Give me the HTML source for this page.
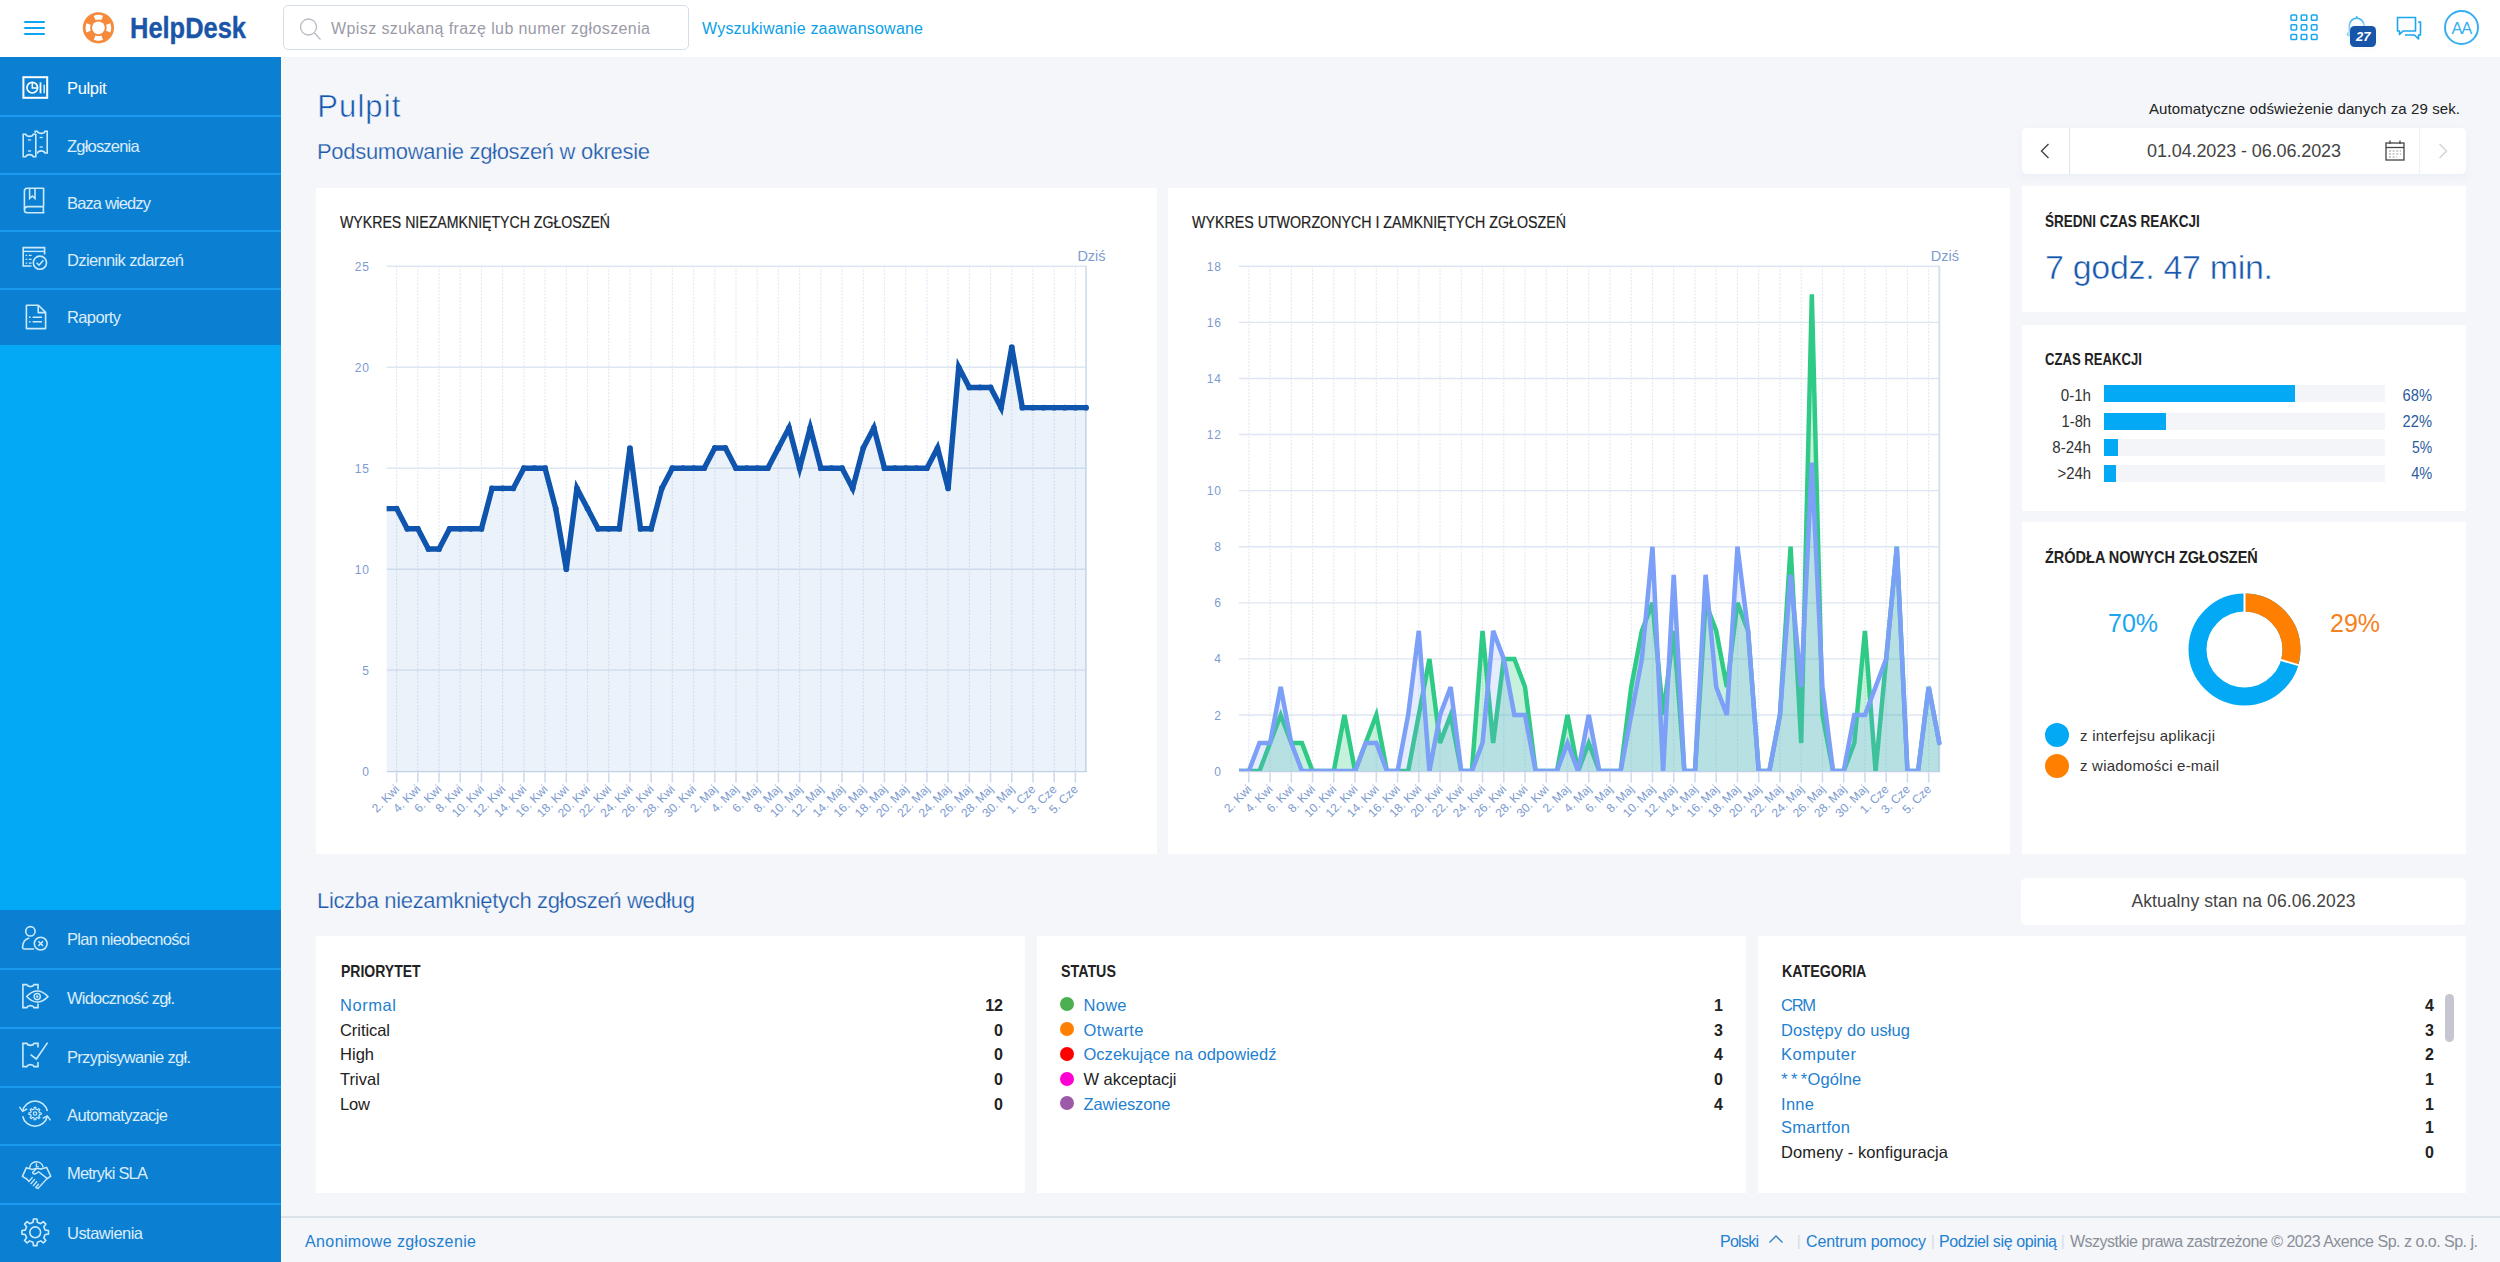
<!DOCTYPE html>
<html lang="pl"><head><meta charset="utf-8"><title>HelpDesk - Pulpit</title>
<style>
html,body{margin:0;padding:0;overflow:hidden;}
html{width:2500px;height:1262px;}
body{width:2500px;height:1262px;overflow:hidden;background:#f4f6fa;position:relative;font-family:"Liberation Sans",sans-serif;}
.t{position:absolute;white-space:nowrap;}
.b{position:absolute;}
svg{position:absolute;overflow:visible;}
</style></head><body>
<div class="b" style="left:0px;top:0px;width:2500px;height:57px;background:#fff;"></div>
<div class="b" style="left:24.4px;top:21.4px;width:21px;height:2px;background:#0aa4f2;border-radius:1px;"></div>
<div class="b" style="left:24.4px;top:27.2px;width:21px;height:2px;background:#0aa4f2;border-radius:1px;"></div>
<div class="b" style="left:24.4px;top:33.0px;width:21px;height:2px;background:#0aa4f2;border-radius:1px;"></div>
<svg style="left:0;top:0" width="300" height="57" viewBox="0 0 300 57"><circle cx="98.4" cy="27.8" r="15.6" fill="#f6893a"/><circle cx="98.4" cy="27.8" r="6.4" fill="#fff"/><path d="M93.78 15.76 A12.9 12.9 0 0 1 103.02 15.76 L101.37 20.05 A8.3 8.3 0 0 0 95.43 20.05 Z" fill="#fff"/><path d="M110.44 23.18 A12.9 12.9 0 0 1 110.44 32.42 L106.15 30.77 A8.3 8.3 0 0 0 106.15 24.83 Z" fill="#fff"/><path d="M103.02 39.84 A12.9 12.9 0 0 1 93.78 39.84 L95.43 35.55 A8.3 8.3 0 0 0 101.37 35.55 Z" fill="#fff"/><path d="M86.36 32.42 A12.9 12.9 0 0 1 86.36 23.18 L90.65 24.83 A8.3 8.3 0 0 0 90.65 30.77 Z" fill="#fff"/></svg>
<div class="t" style="top:8.0px;font-size:30px;line-height:39px;color:#1b55a8;font-weight:bold;left:130.0px;transform:scaleX(0.8484);transform-origin:0 50%;-webkit-text-stroke:0.4px #1b55a8;">HelpDesk</div>
<div class="b" style="left:283px;top:5px;width:404px;height:43px;background:#fff;border:1px solid #d5ddea;border-radius:5px;"></div>
<svg style="left:298px;top:17px" width="24" height="24" viewBox="0 0 24 24" fill="none" stroke="#b9b9c4" stroke-width="1.3">
<circle cx="10.5" cy="10" r="8"/><line x1="16.5" y1="16" x2="22.5" y2="22.5"/></svg>
<div class="t" style="top:17.5px;font-size:16px;line-height:21px;color:#9a9aa8;letter-spacing:0.404px;left:331.0px;">Wpisz szukaną frazę lub numer zgłoszenia</div>
<div class="t" style="top:17.5px;font-size:16px;line-height:21px;color:#0a9fe8;letter-spacing:0.210px;left:702.0px;">Wyszukiwanie zaawansowane</div>
<svg style="left:2290px;top:14px" width="28" height="28" viewBox="0 0 28 28" fill="none" stroke="#1ba6f0" stroke-width="1.5"><rect x="1.0" y="1.0" width="5.6" height="5.2" rx="0.8"/><rect x="11.2" y="1.0" width="5.6" height="5.2" rx="0.8"/><rect x="21.4" y="1.0" width="5.6" height="5.2" rx="0.8"/><rect x="1.0" y="10.7" width="5.6" height="5.2" rx="0.8"/><rect x="11.2" y="10.7" width="5.6" height="5.2" rx="0.8"/><rect x="21.4" y="10.7" width="5.6" height="5.2" rx="0.8"/><rect x="1.0" y="20.4" width="5.6" height="5.2" rx="0.8"/><rect x="11.2" y="20.4" width="5.6" height="5.2" rx="0.8"/><rect x="21.4" y="20.4" width="5.6" height="5.2" rx="0.8"/></svg>
<svg style="left:0;top:0" width="2500" height="57" viewBox="0 0 2500 57" fill="none" stroke="#35aef2" stroke-width="1.6">
<path d="M2349.6 32.6 C2349.2 30.4 2349.4 28.2 2349.4 25.6 A7.3 7.3 0 0 1 2364 25.6 V27"/>
<line x1="2356.7" y1="16.2" x2="2356.7" y2="18.4"/>
<circle cx="2348.6" cy="34.2" r="1.3" stroke-width="1.3"/>
</svg>
<div class="b" style="left:2350px;top:26px;width:26px;height:20.6px;background:#1755a8;border-radius:4.5px;box-shadow:0 0 6px 3px rgba(246,248,252,0.7);"></div>
<div class="t" style="top:28.3px;font-size:13px;line-height:17px;color:#fff;font-weight:bold;left:2226.6px;width:273.4px;text-align:center;font-style:italic;">27</div>
<svg style="left:2396.4px;top:16.2px" width="28" height="26" viewBox="0 0 28 26" fill="none" stroke="#1ba6f0" stroke-width="1.6" stroke-linejoin="round">
<path d="M1.5 1.5 H19.5 V15 H7 L3.5 18.5 V15 H1.5 Z"/>
<path d="M22 6 H24.5 V19 H22.5 V23 L18.5 19 H9"/>
</svg>
<div class="b" style="left:2444px;top:10px;width:31px;height:31px;background:#fff;border:2px solid #35aef2;border-radius:50%;"></div>
<div class="t" style="top:17.7px;font-size:16.5px;line-height:21px;color:#35aef2;letter-spacing:-1.200px;left:2422.6px;width:77.4px;text-align:center;">AA</div>
<div class="b" style="left:0px;top:57px;width:281px;height:1205px;background:#03a9f4;"></div>
<div class="b" style="left:281px;top:57px;width:1px;height:1205px;background:#fcfdff;"></div>
<div class="b" style="left:0px;top:57px;width:281px;height:59px;background:#0b80d3;"></div>
<div class="t" style="top:77.8px;font-size:16.5px;line-height:21px;color:#fff;letter-spacing:-0.335px;left:67.0px;">Pulpit</div>
<div class="b" style="left:0px;top:116px;width:281px;height:58px;background:#0b80d3;"></div>
<div class="b" style="left:0px;top:115px;width:281px;height:1.5px;background:#1a9bf0;"></div>
<div class="t" style="top:135.8px;font-size:16.5px;line-height:21px;color:#dcedfb;letter-spacing:-0.799px;left:67.0px;">Zgłoszenia</div>
<div class="b" style="left:0px;top:174px;width:281px;height:57px;background:#0b80d3;"></div>
<div class="b" style="left:0px;top:173px;width:281px;height:1.5px;background:#1a9bf0;"></div>
<div class="t" style="top:192.6px;font-size:16.5px;line-height:21px;color:#dcedfb;letter-spacing:-0.862px;left:67.0px;">Baza wiedzy</div>
<div class="b" style="left:0px;top:231px;width:281px;height:58px;background:#0b80d3;"></div>
<div class="b" style="left:0px;top:230px;width:281px;height:1.5px;background:#1a9bf0;"></div>
<div class="t" style="top:249.8px;font-size:16.5px;line-height:21px;color:#dcedfb;letter-spacing:-0.637px;left:67.0px;">Dziennik zdarzeń</div>
<div class="b" style="left:0px;top:289px;width:281px;height:56px;background:#0b80d3;"></div>
<div class="b" style="left:0px;top:288px;width:281px;height:1.5px;background:#1a9bf0;"></div>
<div class="t" style="top:307.0px;font-size:16.5px;line-height:21px;color:#dcedfb;letter-spacing:-0.628px;left:67.0px;">Raporty</div>
<div class="b" style="left:0px;top:910px;width:281px;height:59px;background:#0b80d3;"></div>
<div class="t" style="top:928.9px;font-size:16.5px;line-height:21px;color:#dcedfb;letter-spacing:-0.682px;left:67.0px;">Plan nieobecności</div>
<div class="b" style="left:0px;top:969px;width:281px;height:59px;background:#0b80d3;"></div>
<div class="b" style="left:0px;top:968px;width:281px;height:1.5px;background:#1a9bf0;"></div>
<div class="t" style="top:987.9px;font-size:16.5px;line-height:21px;color:#dcedfb;letter-spacing:-0.800px;left:67.0px;">Widoczność zgł.</div>
<div class="b" style="left:0px;top:1028px;width:281px;height:59px;background:#0b80d3;"></div>
<div class="b" style="left:0px;top:1027px;width:281px;height:1.5px;background:#1a9bf0;"></div>
<div class="t" style="top:1046.7px;font-size:16.5px;line-height:21px;color:#dcedfb;letter-spacing:-0.689px;left:67.0px;">Przypisywanie zgł.</div>
<div class="b" style="left:0px;top:1087px;width:281px;height:58px;background:#0b80d3;"></div>
<div class="b" style="left:0px;top:1086px;width:281px;height:1.5px;background:#1a9bf0;"></div>
<div class="t" style="top:1105.0px;font-size:16.5px;line-height:21px;color:#dcedfb;letter-spacing:-0.601px;left:67.0px;">Automatyzacje</div>
<div class="b" style="left:0px;top:1145px;width:281px;height:59px;background:#0b80d3;"></div>
<div class="b" style="left:0px;top:1144px;width:281px;height:1.5px;background:#1a9bf0;"></div>
<div class="t" style="top:1163.4px;font-size:16.5px;line-height:21px;color:#dcedfb;letter-spacing:-0.794px;left:67.0px;">Metryki SLA</div>
<div class="b" style="left:0px;top:1204px;width:281px;height:58px;background:#0b80d3;"></div>
<div class="b" style="left:0px;top:1203px;width:281px;height:1.5px;background:#1a9bf0;"></div>
<div class="t" style="top:1222.5px;font-size:16.5px;line-height:21px;color:#dcedfb;letter-spacing:-0.522px;left:67.0px;">Ustawienia</div>
<svg style="left:0;top:0" width="300" height="1262" viewBox="0 0 300 1262" stroke-linecap="butt"><rect x="23.4" y="77.2" width="23.8" height="20.6" fill="none" stroke="#ffffff" stroke-width="2"/><circle cx="32.3" cy="87.7" r="5.3" fill="none" stroke="#ffffff" stroke-width="1.7"/><path d="M32.3 83 V87.9 H37" fill="none" stroke="#ffffff" stroke-width="1.5" /><path d="M40.5 82.3 V93.3" fill="none" stroke="#ffffff" stroke-width="1.8" /><path d="M44.2 84.8 V93.3" fill="none" stroke="#d9eefb" stroke-width="1.5" /><path d="M35.2 131.2 H37.4 C38.4 134.06 44.00000000000001 134.06 45.00000000000001 131.2 H47.2 V153.0 H45.00000000000001 C44.00000000000001 150.14 38.4 150.14 37.4 153.0 H35.2 Z" fill="none" stroke="#cdeafc" stroke-width="1.6" stroke-linejoin="miter"/><rect x="22.2" y="133" width="14.6" height="25" fill="#0b80d3" stroke="none"/><path d="M23.2 134.2 H25.7 C26.7 137.06 32.300000000000004 137.06 33.300000000000004 134.2 H35.8 V156.8 H33.300000000000004 C32.300000000000004 153.94 26.7 153.94 25.7 156.8 H23.2 Z" fill="none" stroke="#cdeafc" stroke-width="1.6" stroke-linejoin="miter"/><path d="M27.9 140 H31.1" fill="none" stroke="#cdeafc" stroke-width="1.3" /><path d="M27.9 151 H31.1" fill="none" stroke="#cdeafc" stroke-width="1.3" /><path d="M39.6 137.5 H42.800000000000004" fill="none" stroke="#cdeafc" stroke-width="1.3" /><path d="M39.6 147 H42.800000000000004" fill="none" stroke="#cdeafc" stroke-width="1.3" /><path d="M43.6 206.2 V188.2 H27.2 Q24.4 188.2 24.4 191 V210 Q24.4 212.8 27.2 212.8 H44.4 M24.6 209.4 Q24.8 206.6 27.6 206.6 H43.6 M43.4 206.6 V212.6" fill="none" stroke="#cdeafc" stroke-width="1.6" stroke-linejoin="round"/><path d="M29.6 188.4 V198.6 L32.3 196 L35 198.6 V188.4" fill="none" stroke="#cdeafc" stroke-width="1.5" /><path d="M31.5 266 H23.2 V247.6 H44.6 V254.5" fill="none" stroke="#cdeafc" stroke-width="1.6" /><path d="M23.2 251.4 H44.6" fill="none" stroke="#cdeafc" stroke-width="1.4" /><path d="M25.6 255.4 H27.2 M28.8 255.4 H31.6" fill="none" stroke="#cdeafc" stroke-width="1.3" /><path d="M25.6 259.4 H27.2 M28.8 259.4 H31.6" fill="none" stroke="#cdeafc" stroke-width="1.3" /><path d="M25.6 263.2 H27.2 M28.8 263.2 H31.6" fill="none" stroke="#cdeafc" stroke-width="1.3" /><circle cx="39.9" cy="262.7" r="6.6" fill="none" stroke="#cdeafc" stroke-width="1.6"/><path d="M36.6 262.8 L39 265.2 L43.4 260.2" fill="none" stroke="#cdeafc" stroke-width="1.6" /><path d="M26.4 305.2 H38.4 L45.6 312.4 V328.6 H26.4 Z M38.2 305.4 V312.6 H45.4" fill="none" stroke="#cdeafc" stroke-width="1.6" stroke-linejoin="round"/><path d="M29 317.3 H30.6 M32.6 317.3 H42" fill="none" stroke="#cdeafc" stroke-width="1.4" /><path d="M29 321.8 H30.6 M32.6 321.8 H42" fill="none" stroke="#cdeafc" stroke-width="1.4" /><circle cx="30.4" cy="931.3" r="4.7" fill="none" stroke="#cdeafc" stroke-width="1.6"/><path d="M33.5 949 H24.2 Q22.4 949 22.6 946.6 Q23.2 939.6 28.6 938.2" fill="none" stroke="#cdeafc" stroke-width="1.6" stroke-linecap="round"/><circle cx="40.7" cy="943.6" r="6.4" fill="none" stroke="#cdeafc" stroke-width="1.6"/><path d="M38.4 941.3 L43 945.9 M43 941.3 L38.4 945.9" fill="none" stroke="#cdeafc" stroke-width="1.5" /><path d="M38.0 989.5 V984.6 H34.050000000000004 C33.050000000000004 987.24 27.85 987.24 26.85 984.6 H22.9 V1007.6 H26.85 C27.85 1004.96 33.050000000000004 1004.96 34.050000000000004 1007.6 H38.0 V1003.5" fill="none" stroke="#cdeafc" stroke-width="1.6" /><path d="M26.6 996.6 Q37.2 985.6 48 996.6 Q37.2 1007.6 26.6 996.6 Z" fill="none" stroke="#cdeafc" stroke-width="1.5" stroke-linejoin="round"/><circle cx="37.2" cy="996.6" r="3.1" fill="none" stroke="#cdeafc" stroke-width="1.4"/><circle cx="37.2" cy="996.6" r="0.9" fill="#cdeafc" stroke="#cdeafc" stroke-width="0.8"/><path d="M38.0 1047.5 V1043.4 H34.050000000000004 C33.050000000000004 1046.0400000000002 27.85 1046.0400000000002 26.85 1043.4 H22.9 V1066.6 H26.85 C27.85 1063.9599999999998 33.050000000000004 1063.9599999999998 34.050000000000004 1066.6 H38.0 V1062" fill="none" stroke="#cdeafc" stroke-width="1.6" /><path d="M30.6 1054.6 L36.3 1059 L47.6 1042.6" fill="none" stroke="#cdeafc" stroke-width="1.6" /><path d="M22.68 1110.98 A12.6 12.6 0 0 1 47.32 1110.98" fill="none" stroke="#cdeafc" stroke-width="1.5" /><path d="M47.32 1116.22 A12.6 12.6 0 0 1 22.68 1116.22" fill="none" stroke="#cdeafc" stroke-width="1.5" /><path d="M19.48 1106.78 L22.68 1111.38 L27.28 1108.78" fill="none" stroke="#cdeafc" stroke-width="1.4" /><path d="M50.52 1120.42 L47.32 1115.82 L42.72 1118.42" fill="none" stroke="#cdeafc" stroke-width="1.4" /><path d="M41.14 1112.77 L41.14 1114.43 L39.40 1114.55 L38.78 1116.04 L39.93 1117.36 L38.76 1118.53 L37.44 1117.38 L35.95 1118.00 L35.83 1119.74 L34.17 1119.74 L34.05 1118.00 L32.56 1117.38 L31.24 1118.53 L30.07 1117.36 L31.22 1116.04 L30.60 1114.55 L28.86 1114.43 L28.86 1112.77 L30.60 1112.65 L31.22 1111.16 L30.07 1109.84 L31.24 1108.67 L32.56 1109.82 L34.05 1109.20 L34.17 1107.46 L35.83 1107.46 L35.95 1109.20 L37.44 1109.82 L38.76 1108.67 L39.93 1109.84 L38.78 1111.16 L39.40 1112.65 Z" fill="none" stroke="#cdeafc" stroke-width="1.2" stroke-linejoin="round"/><circle cx="35.0" cy="1113.6" r="1.7" fill="none" stroke="#cdeafc" stroke-width="1.1"/><path d="M29.6 1167.8 A6.9 6.9 0 0 1 43.2 1167.4" fill="none" stroke="#cdeafc" stroke-width="1.5" /><path d="M36.4 1163.2 V1166.8 H38.8" fill="none" stroke="#cdeafc" stroke-width="1.3" /><path d="M26.4 1167.6 L22.4 1176.4 L26 1178.6 M26.2 1167.8 L32 1169.4 M46.6 1167.4 L50.8 1176.2 L47.2 1178.6 M46.4 1167.6 L41 1169" fill="none" stroke="#cdeafc" stroke-width="1.5" stroke-linejoin="round" stroke-linecap="round"/><path d="M32 1169.4 L36.4 1168.4 L41 1169 M36.4 1168.6 L32.6 1172.6 Q33.8 1175 36.6 1173.2 L38.6 1171.8 L47 1178.4" fill="none" stroke="#cdeafc" stroke-width="1.4" stroke-linejoin="round" stroke-linecap="round"/><path d="M26.2 1178.6 L29 1181.4 M29 1181.4 L32.2 1177.6 M31 1183.6 L34.4 1179.6 M33.4 1185.6 L36.6 1181.8 M35.8 1187.4 L38.4 1184.2 M36 1187.6 L38 1188.4 L47 1178.6" fill="none" stroke="#cdeafc" stroke-width="1.4" stroke-linecap="round"/><path d="M48.48 1230.52 L48.48 1234.08 L45.17 1234.45 L43.77 1237.83 L45.85 1240.43 L43.33 1242.95 L40.73 1240.87 L37.35 1242.27 L36.98 1245.58 L33.42 1245.58 L33.05 1242.27 L29.67 1240.87 L27.07 1242.95 L24.55 1240.43 L26.63 1237.83 L25.23 1234.45 L21.92 1234.08 L21.92 1230.52 L25.23 1230.15 L26.63 1226.77 L24.55 1224.17 L27.07 1221.65 L29.67 1223.73 L33.05 1222.33 L33.42 1219.02 L36.98 1219.02 L37.35 1222.33 L40.73 1223.73 L43.33 1221.65 L45.85 1224.17 L43.77 1226.77 L45.17 1230.15 Z" fill="none" stroke="#cdeafc" stroke-width="1.6" stroke-linejoin="round"/><circle cx="35.2" cy="1232.3" r="5.4" fill="none" stroke="#cdeafc" stroke-width="1.6"/></svg>
<div class="t" style="top:87.0px;font-size:31px;line-height:40px;color:#1657ad;letter-spacing:1.091px;left:317.3px;-webkit-text-stroke:0.55px #f4f6fa;">Pulpit</div>
<div class="t" style="top:137.1px;font-size:22px;line-height:29px;color:#1c5aab;letter-spacing:-0.313px;left:317.0px;-webkit-text-stroke:0.25px #f4f6fa;">Podsumowanie zgłoszeń w okresie</div>
<div class="t" style="top:99.0px;font-size:15px;line-height:20px;color:#222;letter-spacing:0.102px;right:39.9px;">Automatyczne odświeżenie danych za 29 sek.</div>
<div class="b" style="left:2022px;top:128px;width:444px;height:46px;background:#fff;border-radius:5px;box-shadow:0 3px 8px rgba(190,205,230,0.16);"></div>
<div class="b" style="left:2069px;top:128px;width:1px;height:46px;background:#dfe5ef;"></div>
<div class="b" style="left:2419px;top:128px;width:1px;height:46px;background:#eef1f6;"></div>
<svg style="left:2039px;top:142px" width="12" height="18" viewBox="0 0 12 18" fill="none" stroke="#444" stroke-width="1.4"><path d="M9.5 2 L2.5 9 L9.5 16"/></svg>
<svg style="left:2437px;top:142px" width="12" height="18" viewBox="0 0 12 18" fill="none" stroke="#cfd3da" stroke-width="1.4"><path d="M2.5 2 L9.5 9 L2.5 16"/></svg>
<div class="t" style="top:139.5px;font-size:18px;line-height:23px;color:#444;letter-spacing:-0.098px;left:2147.0px;">01.04.2023 - 06.06.2023</div>
<svg style="left:2385px;top:140px" width="20" height="21" viewBox="0 0 20 21" fill="none" stroke="#444" stroke-width="1.3">
<rect x="1" y="3" width="18" height="17"/><line x1="1" y1="7.5" x2="19" y2="7.5"/><line x1="5" y1="0.5" x2="5" y2="4"/><line x1="15" y1="0.5" x2="15" y2="4"/>
<g stroke="#999" stroke-width="1" stroke-dasharray="2 1.6"><line x1="4" y1="11" x2="16" y2="11"/><line x1="4" y1="14" x2="16" y2="14"/><line x1="4" y1="17" x2="12" y2="17"/></g></svg>
<div class="b" style="left:316px;top:188px;width:841px;height:666px;background:#fff;"></div>
<div class="b" style="left:1168px;top:188px;width:842px;height:666px;background:#fff;"></div>
<div class="b" style="left:2022px;top:186px;width:444px;height:126px;background:#fff;"></div>
<div class="b" style="left:2022px;top:325px;width:444px;height:185.5px;background:#fff;"></div>
<div class="b" style="left:2022px;top:522px;width:444px;height:332px;background:#fff;"></div>
<div class="t" style="top:211.8px;font-size:17px;line-height:22px;color:#222;left:340.0px;transform:scaleX(0.8310);transform-origin:0 50%;-webkit-text-stroke:0.2px #222;">WYKRES NIEZAMKNIĘTYCH ZGŁOSZEŃ</div>
<div class="t" style="top:211.8px;font-size:17px;line-height:22px;color:#222;left:1192.0px;transform:scaleX(0.8372);transform-origin:0 50%;-webkit-text-stroke:0.2px #222;">WYKRES UTWORZONYCH I ZAMKNIĘTYCH ZGŁOSZEŃ</div>
<svg style="left:0;top:0" width="2500" height="1262" viewBox="0 0 2500 1262" font-family="Liberation Sans, sans-serif"><clipPath id="cp1"><rect x="386.8" y="258.3" width="706.0" height="513.3"/></clipPath><line x1="396.61" y1="266.3" x2="396.61" y2="771.1" stroke="#e3eaf5" stroke-width="1.2" stroke-dasharray="2 1.4"/><line x1="417.82" y1="266.3" x2="417.82" y2="771.1" stroke="#e3eaf5" stroke-width="1.2" stroke-dasharray="2 1.4"/><line x1="439.03" y1="266.3" x2="439.03" y2="771.1" stroke="#e3eaf5" stroke-width="1.2" stroke-dasharray="2 1.4"/><line x1="460.24" y1="266.3" x2="460.24" y2="771.1" stroke="#e3eaf5" stroke-width="1.2" stroke-dasharray="2 1.4"/><line x1="481.45" y1="266.3" x2="481.45" y2="771.1" stroke="#e3eaf5" stroke-width="1.2" stroke-dasharray="2 1.4"/><line x1="502.67" y1="266.3" x2="502.67" y2="771.1" stroke="#e3eaf5" stroke-width="1.2" stroke-dasharray="2 1.4"/><line x1="523.88" y1="266.3" x2="523.88" y2="771.1" stroke="#e3eaf5" stroke-width="1.2" stroke-dasharray="2 1.4"/><line x1="545.09" y1="266.3" x2="545.09" y2="771.1" stroke="#e3eaf5" stroke-width="1.2" stroke-dasharray="2 1.4"/><line x1="566.30" y1="266.3" x2="566.30" y2="771.1" stroke="#e3eaf5" stroke-width="1.2" stroke-dasharray="2 1.4"/><line x1="587.52" y1="266.3" x2="587.52" y2="771.1" stroke="#e3eaf5" stroke-width="1.2" stroke-dasharray="2 1.4"/><line x1="608.73" y1="266.3" x2="608.73" y2="771.1" stroke="#e3eaf5" stroke-width="1.2" stroke-dasharray="2 1.4"/><line x1="629.94" y1="266.3" x2="629.94" y2="771.1" stroke="#e3eaf5" stroke-width="1.2" stroke-dasharray="2 1.4"/><line x1="651.15" y1="266.3" x2="651.15" y2="771.1" stroke="#e3eaf5" stroke-width="1.2" stroke-dasharray="2 1.4"/><line x1="672.36" y1="266.3" x2="672.36" y2="771.1" stroke="#e3eaf5" stroke-width="1.2" stroke-dasharray="2 1.4"/><line x1="693.58" y1="266.3" x2="693.58" y2="771.1" stroke="#e3eaf5" stroke-width="1.2" stroke-dasharray="2 1.4"/><line x1="714.79" y1="266.3" x2="714.79" y2="771.1" stroke="#e3eaf5" stroke-width="1.2" stroke-dasharray="2 1.4"/><line x1="736.00" y1="266.3" x2="736.00" y2="771.1" stroke="#e3eaf5" stroke-width="1.2" stroke-dasharray="2 1.4"/><line x1="757.21" y1="266.3" x2="757.21" y2="771.1" stroke="#e3eaf5" stroke-width="1.2" stroke-dasharray="2 1.4"/><line x1="778.42" y1="266.3" x2="778.42" y2="771.1" stroke="#e3eaf5" stroke-width="1.2" stroke-dasharray="2 1.4"/><line x1="799.64" y1="266.3" x2="799.64" y2="771.1" stroke="#e3eaf5" stroke-width="1.2" stroke-dasharray="2 1.4"/><line x1="820.85" y1="266.3" x2="820.85" y2="771.1" stroke="#e3eaf5" stroke-width="1.2" stroke-dasharray="2 1.4"/><line x1="842.06" y1="266.3" x2="842.06" y2="771.1" stroke="#e3eaf5" stroke-width="1.2" stroke-dasharray="2 1.4"/><line x1="863.27" y1="266.3" x2="863.27" y2="771.1" stroke="#e3eaf5" stroke-width="1.2" stroke-dasharray="2 1.4"/><line x1="884.48" y1="266.3" x2="884.48" y2="771.1" stroke="#e3eaf5" stroke-width="1.2" stroke-dasharray="2 1.4"/><line x1="905.70" y1="266.3" x2="905.70" y2="771.1" stroke="#e3eaf5" stroke-width="1.2" stroke-dasharray="2 1.4"/><line x1="926.91" y1="266.3" x2="926.91" y2="771.1" stroke="#e3eaf5" stroke-width="1.2" stroke-dasharray="2 1.4"/><line x1="948.12" y1="266.3" x2="948.12" y2="771.1" stroke="#e3eaf5" stroke-width="1.2" stroke-dasharray="2 1.4"/><line x1="969.33" y1="266.3" x2="969.33" y2="771.1" stroke="#e3eaf5" stroke-width="1.2" stroke-dasharray="2 1.4"/><line x1="990.55" y1="266.3" x2="990.55" y2="771.1" stroke="#e3eaf5" stroke-width="1.2" stroke-dasharray="2 1.4"/><line x1="1011.76" y1="266.3" x2="1011.76" y2="771.1" stroke="#e3eaf5" stroke-width="1.2" stroke-dasharray="2 1.4"/><line x1="1032.97" y1="266.3" x2="1032.97" y2="771.1" stroke="#e3eaf5" stroke-width="1.2" stroke-dasharray="2 1.4"/><line x1="1054.18" y1="266.3" x2="1054.18" y2="771.1" stroke="#e3eaf5" stroke-width="1.2" stroke-dasharray="2 1.4"/><line x1="1075.39" y1="266.3" x2="1075.39" y2="771.1" stroke="#e3eaf5" stroke-width="1.2" stroke-dasharray="2 1.4"/><text x="370" y="775.60" text-anchor="end" font-size="12" letter-spacing="1" fill="#7d9bd0">0</text><line x1="386.8" y1="670.14" x2="1086.0" y2="670.14" stroke="#dde6f3" stroke-width="1.4"/><text x="370" y="674.64" text-anchor="end" font-size="12" letter-spacing="1" fill="#7d9bd0">5</text><line x1="386.8" y1="569.18" x2="1086.0" y2="569.18" stroke="#dde6f3" stroke-width="1.4"/><text x="370" y="573.68" text-anchor="end" font-size="12" letter-spacing="1" fill="#7d9bd0">10</text><line x1="386.8" y1="468.22" x2="1086.0" y2="468.22" stroke="#dde6f3" stroke-width="1.4"/><text x="370" y="472.72" text-anchor="end" font-size="12" letter-spacing="1" fill="#7d9bd0">15</text><line x1="386.8" y1="367.26" x2="1086.0" y2="367.26" stroke="#dde6f3" stroke-width="1.4"/><text x="370" y="371.76" text-anchor="end" font-size="12" letter-spacing="1" fill="#7d9bd0">20</text><line x1="386.8" y1="266.30" x2="1086.0" y2="266.30" stroke="#dde6f3" stroke-width="1.4"/><text x="370" y="270.80" text-anchor="end" font-size="12" letter-spacing="1" fill="#7d9bd0">25</text><line x1="1086.0" y1="265.7" x2="1086.0" y2="771.1" stroke="#d3deee" stroke-width="1.8"/><g clip-path="url(#cp1)"><polygon points="386.0,771.1 386.00,508.60 396.61,508.60 407.21,528.80 417.82,528.80 428.42,548.99 439.03,548.99 449.64,528.80 460.24,528.80 470.85,528.80 481.45,528.80 492.06,488.41 502.67,488.41 513.27,488.41 523.88,468.22 534.48,468.22 545.09,468.22 555.70,508.60 566.30,569.18 576.91,488.41 587.52,508.60 598.12,528.80 608.73,528.80 619.33,528.80 629.94,448.03 640.55,528.80 651.15,528.80 661.76,488.41 672.36,468.22 682.97,468.22 693.58,468.22 704.18,468.22 714.79,448.03 725.39,448.03 736.00,468.22 746.61,468.22 757.21,468.22 767.82,468.22 778.42,448.03 789.03,427.84 799.64,468.22 810.24,427.84 820.85,468.22 831.45,468.22 842.06,468.22 852.67,488.41 863.27,448.03 873.88,427.84 884.48,468.22 895.09,468.22 905.70,468.22 916.30,468.22 926.91,468.22 937.52,448.03 948.12,488.41 958.73,367.26 969.33,387.45 979.94,387.45 990.55,387.45 1001.15,407.64 1011.76,347.07 1022.36,407.64 1032.97,407.64 1043.58,407.64 1054.18,407.64 1064.79,407.64 1075.39,407.64 1086.00,407.64 1086.0,771.1" fill="rgba(15,84,173,0.08)" stroke="none"/><polyline points="386.00,508.60 396.61,508.60 407.21,528.80 417.82,528.80 428.42,548.99 439.03,548.99 449.64,528.80 460.24,528.80 470.85,528.80 481.45,528.80 492.06,488.41 502.67,488.41 513.27,488.41 523.88,468.22 534.48,468.22 545.09,468.22 555.70,508.60 566.30,569.18 576.91,488.41 587.52,508.60 598.12,528.80 608.73,528.80 619.33,528.80 629.94,448.03 640.55,528.80 651.15,528.80 661.76,488.41 672.36,468.22 682.97,468.22 693.58,468.22 704.18,468.22 714.79,448.03 725.39,448.03 736.00,468.22 746.61,468.22 757.21,468.22 767.82,468.22 778.42,448.03 789.03,427.84 799.64,468.22 810.24,427.84 820.85,468.22 831.45,468.22 842.06,468.22 852.67,488.41 863.27,448.03 873.88,427.84 884.48,468.22 895.09,468.22 905.70,468.22 916.30,468.22 926.91,468.22 937.52,448.03 948.12,488.41 958.73,367.26 969.33,387.45 979.94,387.45 990.55,387.45 1001.15,407.64 1011.76,347.07 1022.36,407.64 1032.97,407.64 1043.58,407.64 1054.18,407.64 1064.79,407.64 1075.39,407.64 1086.00,407.64" fill="none" stroke="#0f54ad" stroke-width="5.4" stroke-linejoin="miter" stroke-miterlimit="4" stroke-linecap="round"/><circle cx="386.00" cy="508.60" r="2.85" fill="#0f54ad"/><circle cx="396.61" cy="508.60" r="2.85" fill="#0f54ad"/><circle cx="407.21" cy="528.80" r="2.85" fill="#0f54ad"/><circle cx="417.82" cy="528.80" r="2.85" fill="#0f54ad"/><circle cx="428.42" cy="548.99" r="2.85" fill="#0f54ad"/><circle cx="439.03" cy="548.99" r="2.85" fill="#0f54ad"/><circle cx="449.64" cy="528.80" r="2.85" fill="#0f54ad"/><circle cx="460.24" cy="528.80" r="2.85" fill="#0f54ad"/><circle cx="470.85" cy="528.80" r="2.85" fill="#0f54ad"/><circle cx="481.45" cy="528.80" r="2.85" fill="#0f54ad"/><circle cx="492.06" cy="488.41" r="2.85" fill="#0f54ad"/><circle cx="502.67" cy="488.41" r="2.85" fill="#0f54ad"/><circle cx="513.27" cy="488.41" r="2.85" fill="#0f54ad"/><circle cx="523.88" cy="468.22" r="2.85" fill="#0f54ad"/><circle cx="534.48" cy="468.22" r="2.85" fill="#0f54ad"/><circle cx="545.09" cy="468.22" r="2.85" fill="#0f54ad"/><circle cx="555.70" cy="508.60" r="2.85" fill="#0f54ad"/><circle cx="566.30" cy="569.18" r="2.85" fill="#0f54ad"/><circle cx="576.91" cy="488.41" r="2.85" fill="#0f54ad"/><circle cx="587.52" cy="508.60" r="2.85" fill="#0f54ad"/><circle cx="598.12" cy="528.80" r="2.85" fill="#0f54ad"/><circle cx="608.73" cy="528.80" r="2.85" fill="#0f54ad"/><circle cx="619.33" cy="528.80" r="2.85" fill="#0f54ad"/><circle cx="629.94" cy="448.03" r="2.85" fill="#0f54ad"/><circle cx="640.55" cy="528.80" r="2.85" fill="#0f54ad"/><circle cx="651.15" cy="528.80" r="2.85" fill="#0f54ad"/><circle cx="661.76" cy="488.41" r="2.85" fill="#0f54ad"/><circle cx="672.36" cy="468.22" r="2.85" fill="#0f54ad"/><circle cx="682.97" cy="468.22" r="2.85" fill="#0f54ad"/><circle cx="693.58" cy="468.22" r="2.85" fill="#0f54ad"/><circle cx="704.18" cy="468.22" r="2.85" fill="#0f54ad"/><circle cx="714.79" cy="448.03" r="2.85" fill="#0f54ad"/><circle cx="725.39" cy="448.03" r="2.85" fill="#0f54ad"/><circle cx="736.00" cy="468.22" r="2.85" fill="#0f54ad"/><circle cx="746.61" cy="468.22" r="2.85" fill="#0f54ad"/><circle cx="757.21" cy="468.22" r="2.85" fill="#0f54ad"/><circle cx="767.82" cy="468.22" r="2.85" fill="#0f54ad"/><circle cx="778.42" cy="448.03" r="2.85" fill="#0f54ad"/><circle cx="789.03" cy="427.84" r="2.85" fill="#0f54ad"/><circle cx="799.64" cy="468.22" r="2.85" fill="#0f54ad"/><circle cx="810.24" cy="427.84" r="2.85" fill="#0f54ad"/><circle cx="820.85" cy="468.22" r="2.85" fill="#0f54ad"/><circle cx="831.45" cy="468.22" r="2.85" fill="#0f54ad"/><circle cx="842.06" cy="468.22" r="2.85" fill="#0f54ad"/><circle cx="852.67" cy="488.41" r="2.85" fill="#0f54ad"/><circle cx="863.27" cy="448.03" r="2.85" fill="#0f54ad"/><circle cx="873.88" cy="427.84" r="2.85" fill="#0f54ad"/><circle cx="884.48" cy="468.22" r="2.85" fill="#0f54ad"/><circle cx="895.09" cy="468.22" r="2.85" fill="#0f54ad"/><circle cx="905.70" cy="468.22" r="2.85" fill="#0f54ad"/><circle cx="916.30" cy="468.22" r="2.85" fill="#0f54ad"/><circle cx="926.91" cy="468.22" r="2.85" fill="#0f54ad"/><circle cx="937.52" cy="448.03" r="2.85" fill="#0f54ad"/><circle cx="948.12" cy="488.41" r="2.85" fill="#0f54ad"/><circle cx="958.73" cy="367.26" r="2.85" fill="#0f54ad"/><circle cx="969.33" cy="387.45" r="2.85" fill="#0f54ad"/><circle cx="979.94" cy="387.45" r="2.85" fill="#0f54ad"/><circle cx="990.55" cy="387.45" r="2.85" fill="#0f54ad"/><circle cx="1001.15" cy="407.64" r="2.85" fill="#0f54ad"/><circle cx="1011.76" cy="347.07" r="2.85" fill="#0f54ad"/><circle cx="1022.36" cy="407.64" r="2.85" fill="#0f54ad"/><circle cx="1032.97" cy="407.64" r="2.85" fill="#0f54ad"/><circle cx="1043.58" cy="407.64" r="2.85" fill="#0f54ad"/><circle cx="1054.18" cy="407.64" r="2.85" fill="#0f54ad"/><circle cx="1064.79" cy="407.64" r="2.85" fill="#0f54ad"/><circle cx="1075.39" cy="407.64" r="2.85" fill="#0f54ad"/><circle cx="1086.00" cy="407.64" r="2.85" fill="#0f54ad"/></g><line x1="386.8" y1="771.7" x2="1086.9" y2="771.7" stroke="#c2d0e8" stroke-width="1.3"/><text x="1105.6" y="261.3" text-anchor="end" font-size="14.5" fill="#7d9bd0">Dziś</text><line x1="396.61" y1="772.3000000000001" x2="396.61" y2="782.6" stroke="#d0dbee" stroke-width="1.6"/><text transform="translate(400.01,789.90) rotate(-45)" text-anchor="end" font-size="12.1" letter-spacing="0" fill="#7d9bd0">2. Kwi</text><line x1="417.82" y1="772.3000000000001" x2="417.82" y2="782.6" stroke="#d0dbee" stroke-width="1.6"/><text transform="translate(421.22,789.90) rotate(-45)" text-anchor="end" font-size="12.1" letter-spacing="0" fill="#7d9bd0">4. Kwi</text><line x1="439.03" y1="772.3000000000001" x2="439.03" y2="782.6" stroke="#d0dbee" stroke-width="1.6"/><text transform="translate(442.43,789.90) rotate(-45)" text-anchor="end" font-size="12.1" letter-spacing="0" fill="#7d9bd0">6. Kwi</text><line x1="460.24" y1="772.3000000000001" x2="460.24" y2="782.6" stroke="#d0dbee" stroke-width="1.6"/><text transform="translate(463.64,789.90) rotate(-45)" text-anchor="end" font-size="12.1" letter-spacing="0" fill="#7d9bd0">8. Kwi</text><line x1="481.45" y1="772.3000000000001" x2="481.45" y2="782.6" stroke="#d0dbee" stroke-width="1.6"/><text transform="translate(484.85,789.90) rotate(-45)" text-anchor="end" font-size="12.1" letter-spacing="0" fill="#7d9bd0">10. Kwi</text><line x1="502.67" y1="772.3000000000001" x2="502.67" y2="782.6" stroke="#d0dbee" stroke-width="1.6"/><text transform="translate(506.07,789.90) rotate(-45)" text-anchor="end" font-size="12.1" letter-spacing="0" fill="#7d9bd0">12. Kwi</text><line x1="523.88" y1="772.3000000000001" x2="523.88" y2="782.6" stroke="#d0dbee" stroke-width="1.6"/><text transform="translate(527.28,789.90) rotate(-45)" text-anchor="end" font-size="12.1" letter-spacing="0" fill="#7d9bd0">14. Kwi</text><line x1="545.09" y1="772.3000000000001" x2="545.09" y2="782.6" stroke="#d0dbee" stroke-width="1.6"/><text transform="translate(548.49,789.90) rotate(-45)" text-anchor="end" font-size="12.1" letter-spacing="0" fill="#7d9bd0">16. Kwi</text><line x1="566.30" y1="772.3000000000001" x2="566.30" y2="782.6" stroke="#d0dbee" stroke-width="1.6"/><text transform="translate(569.70,789.90) rotate(-45)" text-anchor="end" font-size="12.1" letter-spacing="0" fill="#7d9bd0">18. Kwi</text><line x1="587.52" y1="772.3000000000001" x2="587.52" y2="782.6" stroke="#d0dbee" stroke-width="1.6"/><text transform="translate(590.92,789.90) rotate(-45)" text-anchor="end" font-size="12.1" letter-spacing="0" fill="#7d9bd0">20. Kwi</text><line x1="608.73" y1="772.3000000000001" x2="608.73" y2="782.6" stroke="#d0dbee" stroke-width="1.6"/><text transform="translate(612.13,789.90) rotate(-45)" text-anchor="end" font-size="12.1" letter-spacing="0" fill="#7d9bd0">22. Kwi</text><line x1="629.94" y1="772.3000000000001" x2="629.94" y2="782.6" stroke="#d0dbee" stroke-width="1.6"/><text transform="translate(633.34,789.90) rotate(-45)" text-anchor="end" font-size="12.1" letter-spacing="0" fill="#7d9bd0">24. Kwi</text><line x1="651.15" y1="772.3000000000001" x2="651.15" y2="782.6" stroke="#d0dbee" stroke-width="1.6"/><text transform="translate(654.55,789.90) rotate(-45)" text-anchor="end" font-size="12.1" letter-spacing="0" fill="#7d9bd0">26. Kwi</text><line x1="672.36" y1="772.3000000000001" x2="672.36" y2="782.6" stroke="#d0dbee" stroke-width="1.6"/><text transform="translate(675.76,789.90) rotate(-45)" text-anchor="end" font-size="12.1" letter-spacing="0" fill="#7d9bd0">28. Kwi</text><line x1="693.58" y1="772.3000000000001" x2="693.58" y2="782.6" stroke="#d0dbee" stroke-width="1.6"/><text transform="translate(696.98,789.90) rotate(-45)" text-anchor="end" font-size="12.1" letter-spacing="0" fill="#7d9bd0">30. Kwi</text><line x1="714.79" y1="772.3000000000001" x2="714.79" y2="782.6" stroke="#d0dbee" stroke-width="1.6"/><text transform="translate(718.19,789.90) rotate(-45)" text-anchor="end" font-size="12.1" letter-spacing="0" fill="#7d9bd0">2. Maj</text><line x1="736.00" y1="772.3000000000001" x2="736.00" y2="782.6" stroke="#d0dbee" stroke-width="1.6"/><text transform="translate(739.40,789.90) rotate(-45)" text-anchor="end" font-size="12.1" letter-spacing="0" fill="#7d9bd0">4. Maj</text><line x1="757.21" y1="772.3000000000001" x2="757.21" y2="782.6" stroke="#d0dbee" stroke-width="1.6"/><text transform="translate(760.61,789.90) rotate(-45)" text-anchor="end" font-size="12.1" letter-spacing="0" fill="#7d9bd0">6. Maj</text><line x1="778.42" y1="772.3000000000001" x2="778.42" y2="782.6" stroke="#d0dbee" stroke-width="1.6"/><text transform="translate(781.82,789.90) rotate(-45)" text-anchor="end" font-size="12.1" letter-spacing="0" fill="#7d9bd0">8. Maj</text><line x1="799.64" y1="772.3000000000001" x2="799.64" y2="782.6" stroke="#d0dbee" stroke-width="1.6"/><text transform="translate(803.04,789.90) rotate(-45)" text-anchor="end" font-size="12.1" letter-spacing="0" fill="#7d9bd0">10. Maj</text><line x1="820.85" y1="772.3000000000001" x2="820.85" y2="782.6" stroke="#d0dbee" stroke-width="1.6"/><text transform="translate(824.25,789.90) rotate(-45)" text-anchor="end" font-size="12.1" letter-spacing="0" fill="#7d9bd0">12. Maj</text><line x1="842.06" y1="772.3000000000001" x2="842.06" y2="782.6" stroke="#d0dbee" stroke-width="1.6"/><text transform="translate(845.46,789.90) rotate(-45)" text-anchor="end" font-size="12.1" letter-spacing="0" fill="#7d9bd0">14. Maj</text><line x1="863.27" y1="772.3000000000001" x2="863.27" y2="782.6" stroke="#d0dbee" stroke-width="1.6"/><text transform="translate(866.67,789.90) rotate(-45)" text-anchor="end" font-size="12.1" letter-spacing="0" fill="#7d9bd0">16. Maj</text><line x1="884.48" y1="772.3000000000001" x2="884.48" y2="782.6" stroke="#d0dbee" stroke-width="1.6"/><text transform="translate(887.88,789.90) rotate(-45)" text-anchor="end" font-size="12.1" letter-spacing="0" fill="#7d9bd0">18. Maj</text><line x1="905.70" y1="772.3000000000001" x2="905.70" y2="782.6" stroke="#d0dbee" stroke-width="1.6"/><text transform="translate(909.10,789.90) rotate(-45)" text-anchor="end" font-size="12.1" letter-spacing="0" fill="#7d9bd0">20. Maj</text><line x1="926.91" y1="772.3000000000001" x2="926.91" y2="782.6" stroke="#d0dbee" stroke-width="1.6"/><text transform="translate(930.31,789.90) rotate(-45)" text-anchor="end" font-size="12.1" letter-spacing="0" fill="#7d9bd0">22. Maj</text><line x1="948.12" y1="772.3000000000001" x2="948.12" y2="782.6" stroke="#d0dbee" stroke-width="1.6"/><text transform="translate(951.52,789.90) rotate(-45)" text-anchor="end" font-size="12.1" letter-spacing="0" fill="#7d9bd0">24. Maj</text><line x1="969.33" y1="772.3000000000001" x2="969.33" y2="782.6" stroke="#d0dbee" stroke-width="1.6"/><text transform="translate(972.73,789.90) rotate(-45)" text-anchor="end" font-size="12.1" letter-spacing="0" fill="#7d9bd0">26. Maj</text><line x1="990.55" y1="772.3000000000001" x2="990.55" y2="782.6" stroke="#d0dbee" stroke-width="1.6"/><text transform="translate(993.95,789.90) rotate(-45)" text-anchor="end" font-size="12.1" letter-spacing="0" fill="#7d9bd0">28. Maj</text><line x1="1011.76" y1="772.3000000000001" x2="1011.76" y2="782.6" stroke="#d0dbee" stroke-width="1.6"/><text transform="translate(1015.16,789.90) rotate(-45)" text-anchor="end" font-size="12.1" letter-spacing="0" fill="#7d9bd0">30. Maj</text><line x1="1032.97" y1="772.3000000000001" x2="1032.97" y2="782.6" stroke="#d0dbee" stroke-width="1.6"/><text transform="translate(1036.37,789.90) rotate(-45)" text-anchor="end" font-size="12.1" letter-spacing="0" fill="#7d9bd0">1. Cze</text><line x1="1054.18" y1="772.3000000000001" x2="1054.18" y2="782.6" stroke="#d0dbee" stroke-width="1.6"/><text transform="translate(1057.58,789.90) rotate(-45)" text-anchor="end" font-size="12.1" letter-spacing="0" fill="#7d9bd0">3. Cze</text><line x1="1075.39" y1="772.3000000000001" x2="1075.39" y2="782.6" stroke="#d0dbee" stroke-width="1.6"/><text transform="translate(1078.79,789.90) rotate(-45)" text-anchor="end" font-size="12.1" letter-spacing="0" fill="#7d9bd0">5. Cze</text></svg>
<svg style="left:0;top:0" width="2500" height="1262" viewBox="0 0 2500 1262" font-family="Liberation Sans, sans-serif"><clipPath id="cp2"><rect x="1239.0" y="258.3" width="707.0999999999999" height="513.3"/></clipPath><line x1="1248.82" y1="266.3" x2="1248.82" y2="771.1" stroke="#e3eaf5" stroke-width="1.2" stroke-dasharray="2 1.4"/><line x1="1270.07" y1="266.3" x2="1270.07" y2="771.1" stroke="#e3eaf5" stroke-width="1.2" stroke-dasharray="2 1.4"/><line x1="1291.31" y1="266.3" x2="1291.31" y2="771.1" stroke="#e3eaf5" stroke-width="1.2" stroke-dasharray="2 1.4"/><line x1="1312.56" y1="266.3" x2="1312.56" y2="771.1" stroke="#e3eaf5" stroke-width="1.2" stroke-dasharray="2 1.4"/><line x1="1333.80" y1="266.3" x2="1333.80" y2="771.1" stroke="#e3eaf5" stroke-width="1.2" stroke-dasharray="2 1.4"/><line x1="1355.05" y1="266.3" x2="1355.05" y2="771.1" stroke="#e3eaf5" stroke-width="1.2" stroke-dasharray="2 1.4"/><line x1="1376.30" y1="266.3" x2="1376.30" y2="771.1" stroke="#e3eaf5" stroke-width="1.2" stroke-dasharray="2 1.4"/><line x1="1397.54" y1="266.3" x2="1397.54" y2="771.1" stroke="#e3eaf5" stroke-width="1.2" stroke-dasharray="2 1.4"/><line x1="1418.79" y1="266.3" x2="1418.79" y2="771.1" stroke="#e3eaf5" stroke-width="1.2" stroke-dasharray="2 1.4"/><line x1="1440.03" y1="266.3" x2="1440.03" y2="771.1" stroke="#e3eaf5" stroke-width="1.2" stroke-dasharray="2 1.4"/><line x1="1461.28" y1="266.3" x2="1461.28" y2="771.1" stroke="#e3eaf5" stroke-width="1.2" stroke-dasharray="2 1.4"/><line x1="1482.52" y1="266.3" x2="1482.52" y2="771.1" stroke="#e3eaf5" stroke-width="1.2" stroke-dasharray="2 1.4"/><line x1="1503.77" y1="266.3" x2="1503.77" y2="771.1" stroke="#e3eaf5" stroke-width="1.2" stroke-dasharray="2 1.4"/><line x1="1525.01" y1="266.3" x2="1525.01" y2="771.1" stroke="#e3eaf5" stroke-width="1.2" stroke-dasharray="2 1.4"/><line x1="1546.26" y1="266.3" x2="1546.26" y2="771.1" stroke="#e3eaf5" stroke-width="1.2" stroke-dasharray="2 1.4"/><line x1="1567.50" y1="266.3" x2="1567.50" y2="771.1" stroke="#e3eaf5" stroke-width="1.2" stroke-dasharray="2 1.4"/><line x1="1588.75" y1="266.3" x2="1588.75" y2="771.1" stroke="#e3eaf5" stroke-width="1.2" stroke-dasharray="2 1.4"/><line x1="1610.00" y1="266.3" x2="1610.00" y2="771.1" stroke="#e3eaf5" stroke-width="1.2" stroke-dasharray="2 1.4"/><line x1="1631.24" y1="266.3" x2="1631.24" y2="771.1" stroke="#e3eaf5" stroke-width="1.2" stroke-dasharray="2 1.4"/><line x1="1652.49" y1="266.3" x2="1652.49" y2="771.1" stroke="#e3eaf5" stroke-width="1.2" stroke-dasharray="2 1.4"/><line x1="1673.73" y1="266.3" x2="1673.73" y2="771.1" stroke="#e3eaf5" stroke-width="1.2" stroke-dasharray="2 1.4"/><line x1="1694.98" y1="266.3" x2="1694.98" y2="771.1" stroke="#e3eaf5" stroke-width="1.2" stroke-dasharray="2 1.4"/><line x1="1716.22" y1="266.3" x2="1716.22" y2="771.1" stroke="#e3eaf5" stroke-width="1.2" stroke-dasharray="2 1.4"/><line x1="1737.47" y1="266.3" x2="1737.47" y2="771.1" stroke="#e3eaf5" stroke-width="1.2" stroke-dasharray="2 1.4"/><line x1="1758.71" y1="266.3" x2="1758.71" y2="771.1" stroke="#e3eaf5" stroke-width="1.2" stroke-dasharray="2 1.4"/><line x1="1779.96" y1="266.3" x2="1779.96" y2="771.1" stroke="#e3eaf5" stroke-width="1.2" stroke-dasharray="2 1.4"/><line x1="1801.20" y1="266.3" x2="1801.20" y2="771.1" stroke="#e3eaf5" stroke-width="1.2" stroke-dasharray="2 1.4"/><line x1="1822.45" y1="266.3" x2="1822.45" y2="771.1" stroke="#e3eaf5" stroke-width="1.2" stroke-dasharray="2 1.4"/><line x1="1843.70" y1="266.3" x2="1843.70" y2="771.1" stroke="#e3eaf5" stroke-width="1.2" stroke-dasharray="2 1.4"/><line x1="1864.94" y1="266.3" x2="1864.94" y2="771.1" stroke="#e3eaf5" stroke-width="1.2" stroke-dasharray="2 1.4"/><line x1="1886.19" y1="266.3" x2="1886.19" y2="771.1" stroke="#e3eaf5" stroke-width="1.2" stroke-dasharray="2 1.4"/><line x1="1907.43" y1="266.3" x2="1907.43" y2="771.1" stroke="#e3eaf5" stroke-width="1.2" stroke-dasharray="2 1.4"/><line x1="1928.68" y1="266.3" x2="1928.68" y2="771.1" stroke="#e3eaf5" stroke-width="1.2" stroke-dasharray="2 1.4"/><text x="1222" y="775.60" text-anchor="end" font-size="12" letter-spacing="1" fill="#7d9bd0">0</text><line x1="1239.0" y1="715.01" x2="1939.3" y2="715.01" stroke="#dde6f3" stroke-width="1.4"/><text x="1222" y="719.51" text-anchor="end" font-size="12" letter-spacing="1" fill="#7d9bd0">2</text><line x1="1239.0" y1="658.92" x2="1939.3" y2="658.92" stroke="#dde6f3" stroke-width="1.4"/><text x="1222" y="663.42" text-anchor="end" font-size="12" letter-spacing="1" fill="#7d9bd0">4</text><line x1="1239.0" y1="602.83" x2="1939.3" y2="602.83" stroke="#dde6f3" stroke-width="1.4"/><text x="1222" y="607.33" text-anchor="end" font-size="12" letter-spacing="1" fill="#7d9bd0">6</text><line x1="1239.0" y1="546.74" x2="1939.3" y2="546.74" stroke="#dde6f3" stroke-width="1.4"/><text x="1222" y="551.24" text-anchor="end" font-size="12" letter-spacing="1" fill="#7d9bd0">8</text><line x1="1239.0" y1="490.66" x2="1939.3" y2="490.66" stroke="#dde6f3" stroke-width="1.4"/><text x="1222" y="495.16" text-anchor="end" font-size="12" letter-spacing="1" fill="#7d9bd0">10</text><line x1="1239.0" y1="434.57" x2="1939.3" y2="434.57" stroke="#dde6f3" stroke-width="1.4"/><text x="1222" y="439.07" text-anchor="end" font-size="12" letter-spacing="1" fill="#7d9bd0">12</text><line x1="1239.0" y1="378.48" x2="1939.3" y2="378.48" stroke="#dde6f3" stroke-width="1.4"/><text x="1222" y="382.98" text-anchor="end" font-size="12" letter-spacing="1" fill="#7d9bd0">14</text><line x1="1239.0" y1="322.39" x2="1939.3" y2="322.39" stroke="#dde6f3" stroke-width="1.4"/><text x="1222" y="326.89" text-anchor="end" font-size="12" letter-spacing="1" fill="#7d9bd0">16</text><line x1="1239.0" y1="266.30" x2="1939.3" y2="266.30" stroke="#dde6f3" stroke-width="1.4"/><text x="1222" y="270.80" text-anchor="end" font-size="12" letter-spacing="1" fill="#7d9bd0">18</text><line x1="1939.3" y1="265.7" x2="1939.3" y2="771.1" stroke="#d3deee" stroke-width="1.8"/><g clip-path="url(#cp2)"><polygon points="1238.2,771.1 1238.20,771.10 1248.82,771.10 1259.45,771.10 1270.07,743.06 1280.69,715.01 1291.31,743.06 1301.94,743.06 1312.56,771.10 1323.18,771.10 1333.80,771.10 1344.43,715.01 1355.05,771.10 1365.67,743.06 1376.30,715.01 1386.92,771.10 1397.54,771.10 1408.16,771.10 1418.79,715.01 1429.41,658.92 1440.03,743.06 1450.65,715.01 1461.28,771.10 1471.90,771.10 1482.52,630.88 1493.15,743.06 1503.77,658.92 1514.39,658.92 1525.01,686.97 1535.64,771.10 1546.26,771.10 1556.88,771.10 1567.50,715.01 1578.13,771.10 1588.75,743.06 1599.37,771.10 1610.00,771.10 1620.62,771.10 1631.24,686.97 1641.86,630.88 1652.49,602.83 1663.11,715.01 1673.73,630.88 1684.35,771.10 1694.98,771.10 1705.60,602.83 1716.22,630.88 1726.85,686.97 1737.47,602.83 1748.09,630.88 1758.71,771.10 1769.34,771.10 1779.96,715.01 1790.58,546.74 1801.20,743.06 1811.83,294.34 1822.45,715.01 1833.07,771.10 1843.70,771.10 1854.32,743.06 1864.94,630.88 1875.56,771.10 1886.19,658.92 1896.81,546.74 1907.43,771.10 1918.05,771.10 1928.68,686.97 1939.30,743.06 1939.3,771.1" fill="rgba(47,203,134,0.28)" stroke="none"/><polyline points="1238.20,771.10 1248.82,771.10 1259.45,771.10 1270.07,743.06 1280.69,715.01 1291.31,743.06 1301.94,743.06 1312.56,771.10 1323.18,771.10 1333.80,771.10 1344.43,715.01 1355.05,771.10 1365.67,743.06 1376.30,715.01 1386.92,771.10 1397.54,771.10 1408.16,771.10 1418.79,715.01 1429.41,658.92 1440.03,743.06 1450.65,715.01 1461.28,771.10 1471.90,771.10 1482.52,630.88 1493.15,743.06 1503.77,658.92 1514.39,658.92 1525.01,686.97 1535.64,771.10 1546.26,771.10 1556.88,771.10 1567.50,715.01 1578.13,771.10 1588.75,743.06 1599.37,771.10 1610.00,771.10 1620.62,771.10 1631.24,686.97 1641.86,630.88 1652.49,602.83 1663.11,715.01 1673.73,630.88 1684.35,771.10 1694.98,771.10 1705.60,602.83 1716.22,630.88 1726.85,686.97 1737.47,602.83 1748.09,630.88 1758.71,771.10 1769.34,771.10 1779.96,715.01 1790.58,546.74 1801.20,743.06 1811.83,294.34 1822.45,715.01 1833.07,771.10 1843.70,771.10 1854.32,743.06 1864.94,630.88 1875.56,771.10 1886.19,658.92 1896.81,546.74 1907.43,771.10 1918.05,771.10 1928.68,686.97 1939.30,743.06" fill="none" stroke="#2fcb86" stroke-width="4.5" stroke-linejoin="miter" stroke-miterlimit="4" stroke-linecap="round"/><polygon points="1238.2,771.1 1238.20,771.10 1248.82,771.10 1259.45,743.06 1270.07,743.06 1280.69,686.97 1291.31,743.06 1301.94,771.10 1312.56,771.10 1323.18,771.10 1333.80,771.10 1344.43,771.10 1355.05,771.10 1365.67,743.06 1376.30,743.06 1386.92,771.10 1397.54,771.10 1408.16,715.01 1418.79,630.88 1429.41,771.10 1440.03,715.01 1450.65,686.97 1461.28,771.10 1471.90,771.10 1482.52,743.06 1493.15,630.88 1503.77,658.92 1514.39,715.01 1525.01,715.01 1535.64,771.10 1546.26,771.10 1556.88,771.10 1567.50,743.06 1578.13,771.10 1588.75,715.01 1599.37,771.10 1610.00,771.10 1620.62,771.10 1631.24,715.01 1641.86,658.92 1652.49,546.74 1663.11,771.10 1673.73,574.79 1684.35,771.10 1694.98,771.10 1705.60,574.79 1716.22,686.97 1726.85,715.01 1737.47,546.74 1748.09,630.88 1758.71,771.10 1769.34,771.10 1779.96,715.01 1790.58,574.79 1801.20,686.97 1811.83,462.61 1822.45,686.97 1833.07,771.10 1843.70,771.10 1854.32,715.01 1864.94,715.01 1875.56,686.97 1886.19,658.92 1896.81,546.74 1907.43,771.10 1918.05,771.10 1928.68,686.97 1939.30,743.06 1939.3,771.1" fill="rgba(124,159,247,0.2)" stroke="none"/><polyline points="1238.20,771.10 1248.82,771.10 1259.45,743.06 1270.07,743.06 1280.69,686.97 1291.31,743.06 1301.94,771.10 1312.56,771.10 1323.18,771.10 1333.80,771.10 1344.43,771.10 1355.05,771.10 1365.67,743.06 1376.30,743.06 1386.92,771.10 1397.54,771.10 1408.16,715.01 1418.79,630.88 1429.41,771.10 1440.03,715.01 1450.65,686.97 1461.28,771.10 1471.90,771.10 1482.52,743.06 1493.15,630.88 1503.77,658.92 1514.39,715.01 1525.01,715.01 1535.64,771.10 1546.26,771.10 1556.88,771.10 1567.50,743.06 1578.13,771.10 1588.75,715.01 1599.37,771.10 1610.00,771.10 1620.62,771.10 1631.24,715.01 1641.86,658.92 1652.49,546.74 1663.11,771.10 1673.73,574.79 1684.35,771.10 1694.98,771.10 1705.60,574.79 1716.22,686.97 1726.85,715.01 1737.47,546.74 1748.09,630.88 1758.71,771.10 1769.34,771.10 1779.96,715.01 1790.58,574.79 1801.20,686.97 1811.83,462.61 1822.45,686.97 1833.07,771.10 1843.70,771.10 1854.32,715.01 1864.94,715.01 1875.56,686.97 1886.19,658.92 1896.81,546.74 1907.43,771.10 1918.05,771.10 1928.68,686.97 1939.30,743.06" fill="none" stroke="#7c9ff7" stroke-width="4.5" stroke-linejoin="miter" stroke-miterlimit="4" stroke-linecap="round"/></g><line x1="1239.0" y1="771.7" x2="1940.2" y2="771.7" stroke="#c2d0e8" stroke-width="1.3"/><text x="1958.8999999999999" y="261.3" text-anchor="end" font-size="14.5" fill="#7d9bd0">Dziś</text><line x1="1248.82" y1="772.3000000000001" x2="1248.82" y2="782.6" stroke="#d0dbee" stroke-width="1.6"/><text transform="translate(1252.22,789.90) rotate(-45)" text-anchor="end" font-size="12.1" letter-spacing="0" fill="#7d9bd0">2. Kwi</text><line x1="1270.07" y1="772.3000000000001" x2="1270.07" y2="782.6" stroke="#d0dbee" stroke-width="1.6"/><text transform="translate(1273.47,789.90) rotate(-45)" text-anchor="end" font-size="12.1" letter-spacing="0" fill="#7d9bd0">4. Kwi</text><line x1="1291.31" y1="772.3000000000001" x2="1291.31" y2="782.6" stroke="#d0dbee" stroke-width="1.6"/><text transform="translate(1294.71,789.90) rotate(-45)" text-anchor="end" font-size="12.1" letter-spacing="0" fill="#7d9bd0">6. Kwi</text><line x1="1312.56" y1="772.3000000000001" x2="1312.56" y2="782.6" stroke="#d0dbee" stroke-width="1.6"/><text transform="translate(1315.96,789.90) rotate(-45)" text-anchor="end" font-size="12.1" letter-spacing="0" fill="#7d9bd0">8. Kwi</text><line x1="1333.80" y1="772.3000000000001" x2="1333.80" y2="782.6" stroke="#d0dbee" stroke-width="1.6"/><text transform="translate(1337.20,789.90) rotate(-45)" text-anchor="end" font-size="12.1" letter-spacing="0" fill="#7d9bd0">10. Kwi</text><line x1="1355.05" y1="772.3000000000001" x2="1355.05" y2="782.6" stroke="#d0dbee" stroke-width="1.6"/><text transform="translate(1358.45,789.90) rotate(-45)" text-anchor="end" font-size="12.1" letter-spacing="0" fill="#7d9bd0">12. Kwi</text><line x1="1376.30" y1="772.3000000000001" x2="1376.30" y2="782.6" stroke="#d0dbee" stroke-width="1.6"/><text transform="translate(1379.70,789.90) rotate(-45)" text-anchor="end" font-size="12.1" letter-spacing="0" fill="#7d9bd0">14. Kwi</text><line x1="1397.54" y1="772.3000000000001" x2="1397.54" y2="782.6" stroke="#d0dbee" stroke-width="1.6"/><text transform="translate(1400.94,789.90) rotate(-45)" text-anchor="end" font-size="12.1" letter-spacing="0" fill="#7d9bd0">16. Kwi</text><line x1="1418.79" y1="772.3000000000001" x2="1418.79" y2="782.6" stroke="#d0dbee" stroke-width="1.6"/><text transform="translate(1422.19,789.90) rotate(-45)" text-anchor="end" font-size="12.1" letter-spacing="0" fill="#7d9bd0">18. Kwi</text><line x1="1440.03" y1="772.3000000000001" x2="1440.03" y2="782.6" stroke="#d0dbee" stroke-width="1.6"/><text transform="translate(1443.43,789.90) rotate(-45)" text-anchor="end" font-size="12.1" letter-spacing="0" fill="#7d9bd0">20. Kwi</text><line x1="1461.28" y1="772.3000000000001" x2="1461.28" y2="782.6" stroke="#d0dbee" stroke-width="1.6"/><text transform="translate(1464.68,789.90) rotate(-45)" text-anchor="end" font-size="12.1" letter-spacing="0" fill="#7d9bd0">22. Kwi</text><line x1="1482.52" y1="772.3000000000001" x2="1482.52" y2="782.6" stroke="#d0dbee" stroke-width="1.6"/><text transform="translate(1485.92,789.90) rotate(-45)" text-anchor="end" font-size="12.1" letter-spacing="0" fill="#7d9bd0">24. Kwi</text><line x1="1503.77" y1="772.3000000000001" x2="1503.77" y2="782.6" stroke="#d0dbee" stroke-width="1.6"/><text transform="translate(1507.17,789.90) rotate(-45)" text-anchor="end" font-size="12.1" letter-spacing="0" fill="#7d9bd0">26. Kwi</text><line x1="1525.01" y1="772.3000000000001" x2="1525.01" y2="782.6" stroke="#d0dbee" stroke-width="1.6"/><text transform="translate(1528.41,789.90) rotate(-45)" text-anchor="end" font-size="12.1" letter-spacing="0" fill="#7d9bd0">28. Kwi</text><line x1="1546.26" y1="772.3000000000001" x2="1546.26" y2="782.6" stroke="#d0dbee" stroke-width="1.6"/><text transform="translate(1549.66,789.90) rotate(-45)" text-anchor="end" font-size="12.1" letter-spacing="0" fill="#7d9bd0">30. Kwi</text><line x1="1567.50" y1="772.3000000000001" x2="1567.50" y2="782.6" stroke="#d0dbee" stroke-width="1.6"/><text transform="translate(1570.90,789.90) rotate(-45)" text-anchor="end" font-size="12.1" letter-spacing="0" fill="#7d9bd0">2. Maj</text><line x1="1588.75" y1="772.3000000000001" x2="1588.75" y2="782.6" stroke="#d0dbee" stroke-width="1.6"/><text transform="translate(1592.15,789.90) rotate(-45)" text-anchor="end" font-size="12.1" letter-spacing="0" fill="#7d9bd0">4. Maj</text><line x1="1610.00" y1="772.3000000000001" x2="1610.00" y2="782.6" stroke="#d0dbee" stroke-width="1.6"/><text transform="translate(1613.40,789.90) rotate(-45)" text-anchor="end" font-size="12.1" letter-spacing="0" fill="#7d9bd0">6. Maj</text><line x1="1631.24" y1="772.3000000000001" x2="1631.24" y2="782.6" stroke="#d0dbee" stroke-width="1.6"/><text transform="translate(1634.64,789.90) rotate(-45)" text-anchor="end" font-size="12.1" letter-spacing="0" fill="#7d9bd0">8. Maj</text><line x1="1652.49" y1="772.3000000000001" x2="1652.49" y2="782.6" stroke="#d0dbee" stroke-width="1.6"/><text transform="translate(1655.89,789.90) rotate(-45)" text-anchor="end" font-size="12.1" letter-spacing="0" fill="#7d9bd0">10. Maj</text><line x1="1673.73" y1="772.3000000000001" x2="1673.73" y2="782.6" stroke="#d0dbee" stroke-width="1.6"/><text transform="translate(1677.13,789.90) rotate(-45)" text-anchor="end" font-size="12.1" letter-spacing="0" fill="#7d9bd0">12. Maj</text><line x1="1694.98" y1="772.3000000000001" x2="1694.98" y2="782.6" stroke="#d0dbee" stroke-width="1.6"/><text transform="translate(1698.38,789.90) rotate(-45)" text-anchor="end" font-size="12.1" letter-spacing="0" fill="#7d9bd0">14. Maj</text><line x1="1716.22" y1="772.3000000000001" x2="1716.22" y2="782.6" stroke="#d0dbee" stroke-width="1.6"/><text transform="translate(1719.62,789.90) rotate(-45)" text-anchor="end" font-size="12.1" letter-spacing="0" fill="#7d9bd0">16. Maj</text><line x1="1737.47" y1="772.3000000000001" x2="1737.47" y2="782.6" stroke="#d0dbee" stroke-width="1.6"/><text transform="translate(1740.87,789.90) rotate(-45)" text-anchor="end" font-size="12.1" letter-spacing="0" fill="#7d9bd0">18. Maj</text><line x1="1758.71" y1="772.3000000000001" x2="1758.71" y2="782.6" stroke="#d0dbee" stroke-width="1.6"/><text transform="translate(1762.11,789.90) rotate(-45)" text-anchor="end" font-size="12.1" letter-spacing="0" fill="#7d9bd0">20. Maj</text><line x1="1779.96" y1="772.3000000000001" x2="1779.96" y2="782.6" stroke="#d0dbee" stroke-width="1.6"/><text transform="translate(1783.36,789.90) rotate(-45)" text-anchor="end" font-size="12.1" letter-spacing="0" fill="#7d9bd0">22. Maj</text><line x1="1801.20" y1="772.3000000000001" x2="1801.20" y2="782.6" stroke="#d0dbee" stroke-width="1.6"/><text transform="translate(1804.60,789.90) rotate(-45)" text-anchor="end" font-size="12.1" letter-spacing="0" fill="#7d9bd0">24. Maj</text><line x1="1822.45" y1="772.3000000000001" x2="1822.45" y2="782.6" stroke="#d0dbee" stroke-width="1.6"/><text transform="translate(1825.85,789.90) rotate(-45)" text-anchor="end" font-size="12.1" letter-spacing="0" fill="#7d9bd0">26. Maj</text><line x1="1843.70" y1="772.3000000000001" x2="1843.70" y2="782.6" stroke="#d0dbee" stroke-width="1.6"/><text transform="translate(1847.10,789.90) rotate(-45)" text-anchor="end" font-size="12.1" letter-spacing="0" fill="#7d9bd0">28. Maj</text><line x1="1864.94" y1="772.3000000000001" x2="1864.94" y2="782.6" stroke="#d0dbee" stroke-width="1.6"/><text transform="translate(1868.34,789.90) rotate(-45)" text-anchor="end" font-size="12.1" letter-spacing="0" fill="#7d9bd0">30. Maj</text><line x1="1886.19" y1="772.3000000000001" x2="1886.19" y2="782.6" stroke="#d0dbee" stroke-width="1.6"/><text transform="translate(1889.59,789.90) rotate(-45)" text-anchor="end" font-size="12.1" letter-spacing="0" fill="#7d9bd0">1. Cze</text><line x1="1907.43" y1="772.3000000000001" x2="1907.43" y2="782.6" stroke="#d0dbee" stroke-width="1.6"/><text transform="translate(1910.83,789.90) rotate(-45)" text-anchor="end" font-size="12.1" letter-spacing="0" fill="#7d9bd0">3. Cze</text><line x1="1928.68" y1="772.3000000000001" x2="1928.68" y2="782.6" stroke="#d0dbee" stroke-width="1.6"/><text transform="translate(1932.08,789.90) rotate(-45)" text-anchor="end" font-size="12.1" letter-spacing="0" fill="#7d9bd0">5. Cze</text></svg>
<div class="t" style="top:210.0px;font-size:17.3px;line-height:22px;color:#222;font-weight:bold;left:2045.0px;transform:scaleX(0.7828);transform-origin:0 50%;">ŚREDNI CZAS REAKCJI</div>
<div class="t" style="top:245.0px;font-size:34px;line-height:44px;color:#1657ad;letter-spacing:-0.318px;left:2045.0px;-webkit-text-stroke:0.5px #fff;">7 godz. 47 min.</div>
<div class="t" style="top:348.0px;font-size:17.3px;line-height:22px;color:#222;font-weight:bold;left:2045.0px;transform:scaleX(0.7588);transform-origin:0 50%;">CZAS REAKCJI</div>
<div class="b" style="left:2104px;top:385.4px;width:281px;height:16.8px;background:#f3f5f9;"></div>
<div class="b" style="left:2104px;top:385.4px;width:191.1px;height:16.8px;background:#03a9f4;"></div>
<div class="t" style="top:384.8px;font-size:16px;line-height:21px;color:#333;right:408.7px;transform:scaleX(0.9463);transform-origin:100% 50%;">0-1h</div>
<div class="t" style="top:384.8px;font-size:16px;line-height:21px;color:#2b5c9e;right:67.5px;transform:scaleX(0.9181);transform-origin:100% 50%;">68%</div>
<div class="b" style="left:2104px;top:412.8px;width:281px;height:16.8px;background:#f3f5f9;"></div>
<div class="b" style="left:2104px;top:412.8px;width:62.4px;height:16.8px;background:#03a9f4;"></div>
<div class="t" style="top:411.4px;font-size:16px;line-height:21px;color:#333;right:408.7px;transform:scaleX(0.9182);transform-origin:100% 50%;">1-8h</div>
<div class="t" style="top:411.4px;font-size:16px;line-height:21px;color:#2b5c9e;right:67.5px;transform:scaleX(0.9181);transform-origin:100% 50%;">22%</div>
<div class="b" style="left:2104px;top:439.2px;width:281px;height:16.8px;background:#f3f5f9;"></div>
<div class="b" style="left:2104px;top:439.2px;width:14.3px;height:16.8px;background:#03a9f4;"></div>
<div class="t" style="top:436.9px;font-size:16px;line-height:21px;color:#333;right:408.7px;transform:scaleX(0.9458);transform-origin:100% 50%;">8-24h</div>
<div class="t" style="top:436.9px;font-size:16px;line-height:21px;color:#2b5c9e;right:67.5px;transform:scaleX(0.8735);transform-origin:100% 50%;">5%</div>
<div class="b" style="left:2104px;top:465.2px;width:281px;height:16.8px;background:#f3f5f9;"></div>
<div class="b" style="left:2104px;top:465.2px;width:11.8px;height:16.8px;background:#03a9f4;"></div>
<div class="t" style="top:462.6px;font-size:16px;line-height:21px;color:#333;right:408.7px;transform:scaleX(0.9324);transform-origin:100% 50%;">&gt;24h</div>
<div class="t" style="top:462.6px;font-size:16px;line-height:21px;color:#2b5c9e;right:67.5px;transform:scaleX(0.9081);transform-origin:100% 50%;">4%</div>
<div class="t" style="top:546.0px;font-size:17.3px;line-height:22px;color:#222;font-weight:bold;left:2045.0px;transform:scaleX(0.8385);transform-origin:0 50%;">ŹRÓDŁA NOWYCH ZGŁOSZEŃ</div>
<div class="t" style="top:607.0px;font-size:25px;line-height:32px;color:#1ba6f0;letter-spacing:-0.018px;left:2108.0px;">70%</div>
<div class="t" style="top:607.0px;font-size:25px;line-height:32px;color:#f58220;letter-spacing:-0.018px;left:2330.0px;">29%</div>
<svg style="left:0;top:0" width="2500" height="1262" viewBox="0 0 2500 1262">
<circle cx="2244.5" cy="649.5" r="47" fill="none" stroke="#03a9f4" stroke-width="18"/>
<circle cx="2244.5" cy="649.5" r="47" fill="none" stroke="#ff8000" stroke-width="18" stroke-dasharray="87.12 295.31" transform="rotate(-90 2244.5 649.5)"/>
<g stroke="#fff" stroke-width="2">
<line x1="2244.5" y1="592.5" x2="2244.5" y2="612.5"/>
<line x1="2280.03" y1="659.82" x2="2299.24" y2="665.40"/>
</g></svg>
<div class="b" style="left:2045px;top:723px;width:24px;height:24px;background:#03a9f4;border-radius:50%;"></div>
<div class="b" style="left:2045px;top:754px;width:24px;height:24px;background:#ff8000;border-radius:50%;"></div>
<div class="t" style="top:726.0px;font-size:15px;line-height:20px;color:#333;letter-spacing:0.236px;left:2080.0px;">z interfejsu aplikacji</div>
<div class="t" style="top:756.0px;font-size:15px;line-height:20px;color:#333;letter-spacing:0.221px;left:2080.0px;">z wiadomości e-mail</div>
<div class="t" style="top:885.9px;font-size:22px;line-height:29px;color:#1c5aab;letter-spacing:-0.336px;left:317.0px;-webkit-text-stroke:0.25px #f4f6fa;">Liczba niezamkniętych zgłoszeń według</div>
<div class="b" style="left:2021px;top:878px;width:445px;height:47px;background:#fff;border-radius:5px;"></div>
<div class="t" style="top:890.0px;font-size:17.5px;line-height:23px;color:#444;letter-spacing:0.084px;left:1987.0px;width:513.0px;text-align:center;">Aktualny stan na 06.06.2023</div>
<div class="b" style="left:316px;top:936px;width:709px;height:257px;background:#fff;"></div>
<div class="b" style="left:1037px;top:936px;width:709px;height:257px;background:#fff;"></div>
<div class="b" style="left:1758px;top:936px;width:708px;height:257px;background:#fff;"></div>
<div class="t" style="top:960.3px;font-size:17.3px;line-height:22px;color:#222;font-weight:bold;left:341.0px;transform:scaleX(0.8103);transform-origin:0 50%;">PRIORYTET</div>
<div class="t" style="top:960.3px;font-size:17.3px;line-height:22px;color:#222;font-weight:bold;left:1061.0px;transform:scaleX(0.8254);transform-origin:0 50%;">STATUS</div>
<div class="t" style="top:960.3px;font-size:17.3px;line-height:22px;color:#222;font-weight:bold;left:1781.5px;transform:scaleX(0.8243);transform-origin:0 50%;">KATEGORIA</div>
<div class="t" style="top:994.5px;font-size:16.5px;line-height:21px;color:#1f7fd0;letter-spacing:0.566px;left:340.0px;">Normal</div>
<div class="t" style="top:994.5px;font-size:16px;line-height:21px;color:#222;font-weight:bold;right:1497.0px;">12</div>
<div class="t" style="top:1019.5px;font-size:16.5px;line-height:21px;color:#222;letter-spacing:-0.060px;left:340.0px;">Critical</div>
<div class="t" style="top:1019.5px;font-size:16px;line-height:21px;color:#222;font-weight:bold;right:1497.0px;">0</div>
<div class="t" style="top:1044.1px;font-size:16.5px;line-height:21px;color:#222;letter-spacing:0.022px;left:340.0px;">High</div>
<div class="t" style="top:1044.1px;font-size:16px;line-height:21px;color:#222;font-weight:bold;right:1497.0px;">0</div>
<div class="t" style="top:1068.8px;font-size:16.5px;line-height:21px;color:#222;letter-spacing:0.056px;left:340.0px;">Trival</div>
<div class="t" style="top:1068.8px;font-size:16px;line-height:21px;color:#222;font-weight:bold;right:1497.0px;">0</div>
<div class="t" style="top:1093.5px;font-size:16.5px;line-height:21px;color:#222;letter-spacing:-0.134px;left:340.0px;">Low</div>
<div class="t" style="top:1093.5px;font-size:16px;line-height:21px;color:#222;font-weight:bold;right:1497.0px;">0</div>
<div class="b" style="left:1060.3px;top:997.2px;width:14.2px;height:14.2px;background:#4caf50;border-radius:50%;"></div>
<div class="t" style="top:994.5px;font-size:16.5px;line-height:21px;color:#1f7fd0;letter-spacing:0.272px;left:1083.5px;">Nowe</div>
<div class="t" style="top:994.5px;font-size:16px;line-height:21px;color:#222;font-weight:bold;right:777.0px;">1</div>
<div class="b" style="left:1060.3px;top:1022.2px;width:14.2px;height:14.2px;background:#ff8000;border-radius:50%;"></div>
<div class="t" style="top:1019.5px;font-size:16.5px;line-height:21px;color:#1f7fd0;letter-spacing:0.373px;left:1083.5px;">Otwarte</div>
<div class="t" style="top:1019.5px;font-size:16px;line-height:21px;color:#222;font-weight:bold;right:777.0px;">3</div>
<div class="b" style="left:1060.3px;top:1046.8px;width:14.2px;height:14.2px;background:#ff0000;border-radius:50%;"></div>
<div class="t" style="top:1044.1px;font-size:16.5px;line-height:21px;color:#1f7fd0;letter-spacing:0.018px;left:1083.5px;">Oczekujące na odpowiedź</div>
<div class="t" style="top:1044.1px;font-size:16px;line-height:21px;color:#222;font-weight:bold;right:777.0px;">4</div>
<div class="b" style="left:1060.3px;top:1071.5px;width:14.2px;height:14.2px;background:#ff00d2;border-radius:50%;"></div>
<div class="t" style="top:1068.8px;font-size:16.5px;line-height:21px;color:#222;letter-spacing:-0.048px;left:1083.5px;">W akceptacji</div>
<div class="t" style="top:1068.8px;font-size:16px;line-height:21px;color:#222;font-weight:bold;right:777.0px;">0</div>
<div class="b" style="left:1060.3px;top:1096.2px;width:14.2px;height:14.2px;background:#9c5aa8;border-radius:50%;"></div>
<div class="t" style="top:1093.5px;font-size:16.5px;line-height:21px;color:#1f7fd0;letter-spacing:-0.115px;left:1083.5px;">Zawieszone</div>
<div class="t" style="top:1093.5px;font-size:16px;line-height:21px;color:#222;font-weight:bold;right:777.0px;">4</div>
<div class="t" style="top:994.5px;font-size:16.5px;line-height:21px;color:#1f7fd0;letter-spacing:-1.288px;left:1781.0px;">CRM</div>
<div class="t" style="top:994.5px;font-size:16px;line-height:21px;color:#222;font-weight:bold;right:66.0px;">4</div>
<div class="t" style="top:1019.5px;font-size:16.5px;line-height:21px;color:#1f7fd0;letter-spacing:0.101px;left:1781.0px;">Dostępy do usług</div>
<div class="t" style="top:1019.5px;font-size:16px;line-height:21px;color:#222;font-weight:bold;right:66.0px;">3</div>
<div class="t" style="top:1044.1px;font-size:16.5px;line-height:21px;color:#1f7fd0;letter-spacing:0.496px;left:1781.0px;">Komputer</div>
<div class="t" style="top:1044.1px;font-size:16px;line-height:21px;color:#222;font-weight:bold;right:66.0px;">2</div>
<div class="t" style="top:1068.8px;font-size:16.5px;line-height:21px;color:#1f7fd0;letter-spacing:3.367px;left:1781.3px;">***</div>
<div class="t" style="top:1068.8px;font-size:16.5px;line-height:21px;color:#1f7fd0;letter-spacing:0.080px;left:1807.6px;">Ogólne</div>
<div class="t" style="top:1068.8px;font-size:16px;line-height:21px;color:#222;font-weight:bold;right:66.0px;">1</div>
<div class="t" style="top:1093.5px;font-size:16.5px;line-height:21px;color:#1f7fd0;letter-spacing:0.296px;left:1781.0px;">Inne</div>
<div class="t" style="top:1093.5px;font-size:16px;line-height:21px;color:#222;font-weight:bold;right:66.0px;">1</div>
<div class="t" style="top:1117.1px;font-size:16.5px;line-height:21px;color:#1f7fd0;letter-spacing:0.295px;left:1781.0px;">Smartfon</div>
<div class="t" style="top:1117.1px;font-size:16px;line-height:21px;color:#222;font-weight:bold;right:66.0px;">1</div>
<div class="t" style="top:1141.8px;font-size:16.5px;line-height:21px;color:#222;letter-spacing:0.097px;left:1781.0px;">Domeny - konfiguracja</div>
<div class="t" style="top:1141.8px;font-size:16px;line-height:21px;color:#222;font-weight:bold;right:66.0px;">0</div>
<div class="b" style="left:2445px;top:994px;width:9px;height:48px;background:#c6c6d0;border-radius:5px;"></div>
<div class="b" style="left:281px;top:1216px;width:2219px;height:2px;background:#dde3eb;"></div>
<div class="t" style="top:1230.5px;font-size:16px;line-height:21px;color:#1f7fd0;letter-spacing:0.387px;left:305.0px;">Anonimowe zgłoszenie</div>
<div class="t" style="top:1230.5px;font-size:16px;line-height:21px;color:#1f7fd0;letter-spacing:-0.736px;left:1720.0px;">Polski</div>
<svg style="left:1768px;top:1234px" width="16" height="10" viewBox="0 0 16 10" fill="none" stroke="#2f80c6" stroke-width="1.3"><path d="M1.5 8.5 L8 2 L14.5 8.5"/></svg>
<div class="t" style="top:1232.0px;font-size:14px;line-height:18px;color:#d3d9e3;left:1797.0px;">|</div>
<div class="t" style="top:1230.5px;font-size:16px;line-height:21px;color:#1f7fd0;letter-spacing:-0.139px;left:1806.0px;">Centrum pomocy</div>
<div class="t" style="top:1232.0px;font-size:14px;line-height:18px;color:#d3d9e3;left:1931.0px;">|</div>
<div class="t" style="top:1230.5px;font-size:16px;line-height:21px;color:#1f7fd0;letter-spacing:-0.383px;left:1939.0px;">Podziel się opinią</div>
<div class="t" style="top:1232.0px;font-size:14px;line-height:18px;color:#d3d9e3;left:2061.0px;">|</div>
<div class="t" style="top:1230.5px;font-size:16px;line-height:21px;color:#8a8f98;letter-spacing:-0.498px;left:2070.0px;">Wszystkie prawa zastrzeżone © 2023 Axence Sp. z o.o. Sp. j.</div>
</body></html>
